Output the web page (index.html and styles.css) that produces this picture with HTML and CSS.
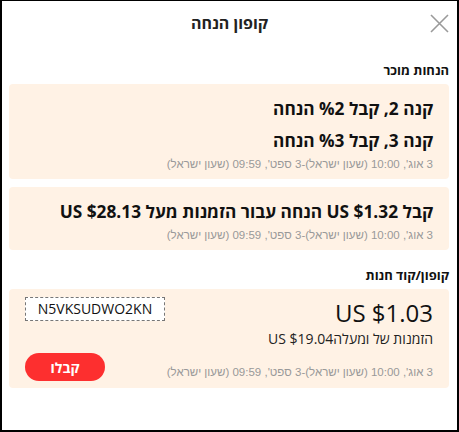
FILE: index.html
```html
<!DOCTYPE html>
<html lang="he" dir="rtl">
<head>
<meta charset="utf-8">
<title>קופון הנחה</title>
<link rel="stylesheet" href="styles.css">
</head>
<body>
<div class="dialog">
  <div class="header">
    <button class="close" aria-label="close">
      <svg width="19" height="19" viewBox="0 0 19 19"><path d="M1 1 L18 18 M18 1 L1 18" stroke="#9a9a9a" stroke-width="1.6" fill="none"/></svg>
    </button>
    <h1 class="title">קופון הנחה</h1>
    <span class="spacer"></span>
  </div>
  <div class="content">
    <h2 class="section-title">הנחות מוכר</h2>
    <div class="card">
      <div class="offer">קנה 2, קבל %2 הנחה</div>
      <div class="offer offer-next">קנה 3, קבל %3 הנחה</div>
      <div class="date">3 אוג', 10:00 (שעון ישראל)-3 ספט', 09:59 (שעון ישראל)</div>
    </div>
    <div class="card card-gap">
      <div class="offer">קבל US $1.32 הנחה עבור הזמנות מעל US $28.13</div>
      <div class="date">3 אוג', 10:00 (שעון ישראל)-3 ספט', 09:59 (שעון ישראל)</div>
    </div>
    <h2 class="section-title section-second">קופון/קוד חנות</h2>
    <div class="card coupon">
      <div class="coupon-top">
        <div class="coupon-info">
          <div class="price">US $1.03</div>
          <div class="min">הזמנות של ומעלהUS $19.04</div>
        </div>
        <div class="code">N5VKSUDWO2KN</div>
      </div>
      <div class="coupon-bottom">
        <div class="date coupon-date">3 אוג', 10:00 (שעון ישראל)-3 ספט', 09:59 (שעון ישראל)</div>
        <button class="get">קבלו</button>
      </div>
    </div>
  </div>
</div>
</body>
</html>
```

FILE: styles.css
```css
* { box-sizing: border-box; }
html, body { margin: 0; padding: 0; background: #fff; }
body { font-family: "Open Sans", "DejaVu Sans", sans-serif; color: #222; }

.dialog {
  width: 459px;
  height: 432px;
  border-style: solid;
  border-color: #000;
  border-width: 1px 2px 2px 2px;
  background: #fff;
}

.header {
  height: 44px;
  padding: 0 8px;
  display: grid;
  grid-template-columns: 1fr auto 1fr;
  align-items: center;
}
.close {
  justify-self: start;
  width: 19px;
  height: 19px;
  padding: 0;
  border: 0;
  background: none;
  display: flex;
}
.title {
  margin: 0;
  font-size: 16px;
  font-weight: 700;
  line-height: 22px;
  color: #222;
}

.content { padding: 0 8px 0 7px; }

.section-title {
  margin: 15px 0 4px;
  font-size: 13px;
  font-weight: 700;
  line-height: 20px;
  color: #111;
}
.section-second { margin-top: 15px; }

.card {
  background: #fff2e5;
  border-radius: 4px;
  padding: 12px 16px 7px;
}
.card-gap { margin-top: 8px; }

.offer {
  font-size: 17.3px;
  font-weight: 700;
  line-height: 26px;
  color: #111;
}
.offer-next { margin-top: 6px; }

.date {
  margin-top: 2px;
  font-family: "Liberation Sans", Arial, sans-serif;
  font-size: 11.5px;
  line-height: 16px;
  color: #999;
}

.coupon { padding: 8px 16px 7px; }
.coupon-top {
  display: flex;
  justify-content: space-between;
  align-items: flex-start;
}
.price {
  font-size: 24px;
  line-height: 32px;
  color: #111;
}
.min {
  font-size: 14px;
  line-height: 20px;
  color: #222;
}
.code {
  width: 140px;
  height: 24px;
  border: 1px dashed #777;
  font-size: 14px;
  line-height: 22px;
  text-align: center;
  color: #111;
  background: #fff;
}
.coupon-bottom {
  margin-top: 4px;
  display: flex;
  justify-content: space-between;
  align-items: flex-end;
}
.coupon-date { margin: 0 0 1px; }
.get {
  width: 80px;
  height: 28px;
  border: 0;
  border-radius: 14px;
  background: #fd2f2f;
  color: #fff;
  font-family: "Open Sans", "DejaVu Sans", sans-serif;
  font-size: 14px;
  font-weight: 700;
  padding: 0;
}
```
